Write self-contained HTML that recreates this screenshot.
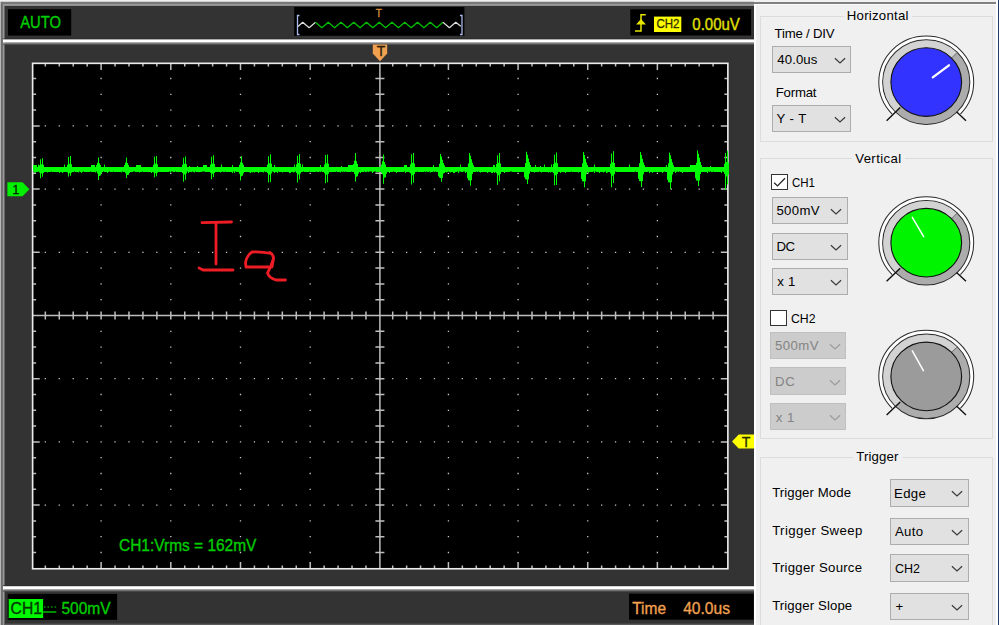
<!DOCTYPE html>
<html lang="en"><head><meta charset="utf-8"><title>Oscilloscope</title>
<style>
html,body{margin:0;padding:0}
body{width:999px;height:625px;overflow:hidden;background:#f0f0f0;position:relative;font-family:"Liberation Sans",sans-serif}
.scope{position:absolute;left:0;top:0;display:block}
.scope text{font-family:"Liberation Sans",sans-serif}
.panel{position:absolute;left:754px;top:0;width:245px;height:625px;background:#f0f0f0;overflow:hidden}
.wl{position:absolute;left:0;top:4px;width:2.2px;height:621px;background:#fff}
.rt{position:absolute;left:0;top:1.9px;width:242.4px;height:2.1px;background:#808080}
.rt2{position:absolute;left:0;top:4px;width:242.4px;height:1.2px;background:#fbfbfb}
.re1{position:absolute;left:242.4px;top:0;width:1.6px;height:625px;background:#fff}
.re2{position:absolute;left:244px;top:0;width:1px;height:625px;background:#1e3a6e}
.gb{position:absolute;box-sizing:border-box;border:1px solid #dcdcdc}
.cover{position:absolute;background:#f0f0f0}
.dd{position:absolute;box-sizing:border-box;background:#e1e1e1;border:1px solid #adadad}
.dd.dis{background:#cccccc;border-color:#bfbfbf}
.chev{position:absolute;display:block}
.cb{position:absolute;box-sizing:border-box;width:16.6px;height:16.4px;border:1.2px solid #333;background:#fff}
.cb svg{position:absolute;left:-1.2px;top:-1.2px}
.knobs{position:absolute;left:0;top:0}
.t{position:absolute;white-space:nowrap;transform-origin:0 0;font-size:13.2px;line-height:13.2px;height:13.2px}
</style></head>
<body>
<svg class="scope" width="754" height="625" viewBox="0 0 754 625">
<rect x="0" y="0" width="754" height="625" fill="#333"/>
<rect x="0" y="0" width="754" height="1.9" fill="#f0f0f0"/>
<rect x="0" y="1.9" width="1.1" height="624" fill="#b8b8b8"/>
<rect x="1.1" y="1.9" width="752.9" height="2.1" fill="#787878"/>
<rect x="1.1" y="1.9" width="1.9" height="624" fill="#747474"/>
<rect x="3" y="4" width="751" height="1.9" fill="#9a9a9a"/>
<rect x="3" y="4" width="1.5" height="622" fill="#9a9a9a"/>
<rect x="4.5" y="623.6" width="749.5" height="1.4" fill="#5a5a5a"/>
<rect x="3" y="38.5" width="751" height="1" fill="#2b2b2b"/>
<rect x="3" y="39.4" width="751" height="3.1" fill="#fff"/>
<rect x="3" y="42.5" width="751" height="1" fill="#bdbdbd"/>
<rect x="3" y="43.5" width="751" height="1" fill="#777"/>
<rect x="3" y="44.5" width="751" height="0.6" fill="#4a4a4a"/>
<rect x="3" y="585.3" width="751" height="1" fill="#2b2b2b"/>
<rect x="3" y="586.2" width="751" height="3.1" fill="#fff"/>
<rect x="3" y="589.3" width="751" height="1" fill="#bdbdbd"/>
<rect x="3" y="590.3" width="751" height="1" fill="#777"/>
<rect x="3" y="591.3" width="751" height="0.6" fill="#4a4a4a"/>
<rect x="8" y="9.2" width="63.2" height="26.4" fill="#000"/>
<rect x="294.2" y="7" width="170.2" height="28.8" fill="#000"/>
<rect x="630.3" y="9.3" width="120.8" height="26.2" fill="#000"/>
<rect x="7.7" y="593.9" width="109.4" height="26" fill="#000"/>
<rect x="629" y="593.7" width="124.7" height="26" fill="#000"/>
<rect x="31.8" y="62.5" width="697.1" height="507.2" fill="#000"/>
<path d="M44.69,125.9h1.3M58.63,125.9h1.3M72.57,125.9h1.3M86.51,125.9h1.3M100.45,125.9h1.3M114.39,125.9h1.3M128.33,125.9h1.3M142.27,125.9h1.3M156.21,125.9h1.3M170.15,125.9h1.3M184.09,125.9h1.3M198.03,125.9h1.3M211.97,125.9h1.3M225.91,125.9h1.3M239.85,125.9h1.3M253.79,125.9h1.3M267.73,125.9h1.3M281.67,125.9h1.3M295.61,125.9h1.3M309.55,125.9h1.3M323.49,125.9h1.3M337.43,125.9h1.3M351.37,125.9h1.3M365.31,125.9h1.3M379.25,125.9h1.3M392.05,125.9h1.3M405.98,125.9h1.3M419.91,125.9h1.3M433.84,125.9h1.3M447.77,125.9h1.3M461.7,125.9h1.3M475.63,125.9h1.3M489.56,125.9h1.3M503.49,125.9h1.3M517.42,125.9h1.3M531.35,125.9h1.3M545.28,125.9h1.3M559.21,125.9h1.3M573.14,125.9h1.3M587.07,125.9h1.3M601,125.9h1.3M614.93,125.9h1.3M628.86,125.9h1.3M642.79,125.9h1.3M656.72,125.9h1.3M670.65,125.9h1.3M684.58,125.9h1.3M698.51,125.9h1.3M712.44,125.9h1.3M44.69,189.1h1.3M58.63,189.1h1.3M72.57,189.1h1.3M86.51,189.1h1.3M100.45,189.1h1.3M114.39,189.1h1.3M128.33,189.1h1.3M142.27,189.1h1.3M156.21,189.1h1.3M170.15,189.1h1.3M184.09,189.1h1.3M198.03,189.1h1.3M211.97,189.1h1.3M225.91,189.1h1.3M239.85,189.1h1.3M253.79,189.1h1.3M267.73,189.1h1.3M281.67,189.1h1.3M295.61,189.1h1.3M309.55,189.1h1.3M323.49,189.1h1.3M337.43,189.1h1.3M351.37,189.1h1.3M365.31,189.1h1.3M379.25,189.1h1.3M392.05,189.1h1.3M405.98,189.1h1.3M419.91,189.1h1.3M433.84,189.1h1.3M447.77,189.1h1.3M461.7,189.1h1.3M475.63,189.1h1.3M489.56,189.1h1.3M503.49,189.1h1.3M517.42,189.1h1.3M531.35,189.1h1.3M545.28,189.1h1.3M559.21,189.1h1.3M573.14,189.1h1.3M587.07,189.1h1.3M601,189.1h1.3M614.93,189.1h1.3M628.86,189.1h1.3M642.79,189.1h1.3M656.72,189.1h1.3M670.65,189.1h1.3M684.58,189.1h1.3M698.51,189.1h1.3M712.44,189.1h1.3M44.69,252.3h1.3M58.63,252.3h1.3M72.57,252.3h1.3M86.51,252.3h1.3M100.45,252.3h1.3M114.39,252.3h1.3M128.33,252.3h1.3M142.27,252.3h1.3M156.21,252.3h1.3M170.15,252.3h1.3M184.09,252.3h1.3M198.03,252.3h1.3M211.97,252.3h1.3M225.91,252.3h1.3M239.85,252.3h1.3M253.79,252.3h1.3M267.73,252.3h1.3M281.67,252.3h1.3M295.61,252.3h1.3M309.55,252.3h1.3M323.49,252.3h1.3M337.43,252.3h1.3M351.37,252.3h1.3M365.31,252.3h1.3M379.25,252.3h1.3M392.05,252.3h1.3M405.98,252.3h1.3M419.91,252.3h1.3M433.84,252.3h1.3M447.77,252.3h1.3M461.7,252.3h1.3M475.63,252.3h1.3M489.56,252.3h1.3M503.49,252.3h1.3M517.42,252.3h1.3M531.35,252.3h1.3M545.28,252.3h1.3M559.21,252.3h1.3M573.14,252.3h1.3M587.07,252.3h1.3M601,252.3h1.3M614.93,252.3h1.3M628.86,252.3h1.3M642.79,252.3h1.3M656.72,252.3h1.3M670.65,252.3h1.3M684.58,252.3h1.3M698.51,252.3h1.3M712.44,252.3h1.3M44.69,378.7h1.3M58.63,378.7h1.3M72.57,378.7h1.3M86.51,378.7h1.3M100.45,378.7h1.3M114.39,378.7h1.3M128.33,378.7h1.3M142.27,378.7h1.3M156.21,378.7h1.3M170.15,378.7h1.3M184.09,378.7h1.3M198.03,378.7h1.3M211.97,378.7h1.3M225.91,378.7h1.3M239.85,378.7h1.3M253.79,378.7h1.3M267.73,378.7h1.3M281.67,378.7h1.3M295.61,378.7h1.3M309.55,378.7h1.3M323.49,378.7h1.3M337.43,378.7h1.3M351.37,378.7h1.3M365.31,378.7h1.3M379.25,378.7h1.3M392.05,378.7h1.3M405.98,378.7h1.3M419.91,378.7h1.3M433.84,378.7h1.3M447.77,378.7h1.3M461.7,378.7h1.3M475.63,378.7h1.3M489.56,378.7h1.3M503.49,378.7h1.3M517.42,378.7h1.3M531.35,378.7h1.3M545.28,378.7h1.3M559.21,378.7h1.3M573.14,378.7h1.3M587.07,378.7h1.3M601,378.7h1.3M614.93,378.7h1.3M628.86,378.7h1.3M642.79,378.7h1.3M656.72,378.7h1.3M670.65,378.7h1.3M684.58,378.7h1.3M698.51,378.7h1.3M712.44,378.7h1.3M44.69,441.9h1.3M58.63,441.9h1.3M72.57,441.9h1.3M86.51,441.9h1.3M100.45,441.9h1.3M114.39,441.9h1.3M128.33,441.9h1.3M142.27,441.9h1.3M156.21,441.9h1.3M170.15,441.9h1.3M184.09,441.9h1.3M198.03,441.9h1.3M211.97,441.9h1.3M225.91,441.9h1.3M239.85,441.9h1.3M253.79,441.9h1.3M267.73,441.9h1.3M281.67,441.9h1.3M295.61,441.9h1.3M309.55,441.9h1.3M323.49,441.9h1.3M337.43,441.9h1.3M351.37,441.9h1.3M365.31,441.9h1.3M379.25,441.9h1.3M392.05,441.9h1.3M405.98,441.9h1.3M419.91,441.9h1.3M433.84,441.9h1.3M447.77,441.9h1.3M461.7,441.9h1.3M475.63,441.9h1.3M489.56,441.9h1.3M503.49,441.9h1.3M517.42,441.9h1.3M531.35,441.9h1.3M545.28,441.9h1.3M559.21,441.9h1.3M573.14,441.9h1.3M587.07,441.9h1.3M601,441.9h1.3M614.93,441.9h1.3M628.86,441.9h1.3M642.79,441.9h1.3M656.72,441.9h1.3M670.65,441.9h1.3M684.58,441.9h1.3M698.51,441.9h1.3M712.44,441.9h1.3M44.69,505.1h1.3M58.63,505.1h1.3M72.57,505.1h1.3M86.51,505.1h1.3M100.45,505.1h1.3M114.39,505.1h1.3M128.33,505.1h1.3M142.27,505.1h1.3M156.21,505.1h1.3M170.15,505.1h1.3M184.09,505.1h1.3M198.03,505.1h1.3M211.97,505.1h1.3M225.91,505.1h1.3M239.85,505.1h1.3M253.79,505.1h1.3M267.73,505.1h1.3M281.67,505.1h1.3M295.61,505.1h1.3M309.55,505.1h1.3M323.49,505.1h1.3M337.43,505.1h1.3M351.37,505.1h1.3M365.31,505.1h1.3M379.25,505.1h1.3M392.05,505.1h1.3M405.98,505.1h1.3M419.91,505.1h1.3M433.84,505.1h1.3M447.77,505.1h1.3M461.7,505.1h1.3M475.63,505.1h1.3M489.56,505.1h1.3M503.49,505.1h1.3M517.42,505.1h1.3M531.35,505.1h1.3M545.28,505.1h1.3M559.21,505.1h1.3M573.14,505.1h1.3M587.07,505.1h1.3M601,505.1h1.3M614.93,505.1h1.3M628.86,505.1h1.3M642.79,505.1h1.3M656.72,505.1h1.3M670.65,505.1h1.3M684.58,505.1h1.3M698.51,505.1h1.3M712.44,505.1h1.3M100.45,78.5h1.3M100.45,94.3h1.3M100.45,110.1h1.3M100.45,141.7h1.3M100.45,157.5h1.3M100.45,173.3h1.3M100.45,204.9h1.3M100.45,220.7h1.3M100.45,236.5h1.3M100.45,268.1h1.3M100.45,283.9h1.3M100.45,299.7h1.3M100.45,331.3h1.3M100.45,347.1h1.3M100.45,362.9h1.3M100.45,394.5h1.3M100.45,410.3h1.3M100.45,426.1h1.3M100.45,457.7h1.3M100.45,473.5h1.3M100.45,489.3h1.3M100.45,520.9h1.3M100.45,536.7h1.3M100.45,552.5h1.3M170.15,78.5h1.3M170.15,94.3h1.3M170.15,110.1h1.3M170.15,141.7h1.3M170.15,157.5h1.3M170.15,173.3h1.3M170.15,204.9h1.3M170.15,220.7h1.3M170.15,236.5h1.3M170.15,268.1h1.3M170.15,283.9h1.3M170.15,299.7h1.3M170.15,331.3h1.3M170.15,347.1h1.3M170.15,362.9h1.3M170.15,394.5h1.3M170.15,410.3h1.3M170.15,426.1h1.3M170.15,457.7h1.3M170.15,473.5h1.3M170.15,489.3h1.3M170.15,520.9h1.3M170.15,536.7h1.3M170.15,552.5h1.3M239.85,78.5h1.3M239.85,94.3h1.3M239.85,110.1h1.3M239.85,141.7h1.3M239.85,157.5h1.3M239.85,173.3h1.3M239.85,204.9h1.3M239.85,220.7h1.3M239.85,236.5h1.3M239.85,268.1h1.3M239.85,283.9h1.3M239.85,299.7h1.3M239.85,331.3h1.3M239.85,347.1h1.3M239.85,362.9h1.3M239.85,394.5h1.3M239.85,410.3h1.3M239.85,426.1h1.3M239.85,457.7h1.3M239.85,473.5h1.3M239.85,489.3h1.3M239.85,520.9h1.3M239.85,536.7h1.3M239.85,552.5h1.3M309.55,78.5h1.3M309.55,94.3h1.3M309.55,110.1h1.3M309.55,141.7h1.3M309.55,157.5h1.3M309.55,173.3h1.3M309.55,204.9h1.3M309.55,220.7h1.3M309.55,236.5h1.3M309.55,268.1h1.3M309.55,283.9h1.3M309.55,299.7h1.3M309.55,331.3h1.3M309.55,347.1h1.3M309.55,362.9h1.3M309.55,394.5h1.3M309.55,410.3h1.3M309.55,426.1h1.3M309.55,457.7h1.3M309.55,473.5h1.3M309.55,489.3h1.3M309.55,520.9h1.3M309.55,536.7h1.3M309.55,552.5h1.3M447.77,78.5h1.3M447.77,94.3h1.3M447.77,110.1h1.3M447.77,141.7h1.3M447.77,157.5h1.3M447.77,173.3h1.3M447.77,204.9h1.3M447.77,220.7h1.3M447.77,236.5h1.3M447.77,268.1h1.3M447.77,283.9h1.3M447.77,299.7h1.3M447.77,331.3h1.3M447.77,347.1h1.3M447.77,362.9h1.3M447.77,394.5h1.3M447.77,410.3h1.3M447.77,426.1h1.3M447.77,457.7h1.3M447.77,473.5h1.3M447.77,489.3h1.3M447.77,520.9h1.3M447.77,536.7h1.3M447.77,552.5h1.3M517.42,78.5h1.3M517.42,94.3h1.3M517.42,110.1h1.3M517.42,141.7h1.3M517.42,157.5h1.3M517.42,173.3h1.3M517.42,204.9h1.3M517.42,220.7h1.3M517.42,236.5h1.3M517.42,268.1h1.3M517.42,283.9h1.3M517.42,299.7h1.3M517.42,331.3h1.3M517.42,347.1h1.3M517.42,362.9h1.3M517.42,394.5h1.3M517.42,410.3h1.3M517.42,426.1h1.3M517.42,457.7h1.3M517.42,473.5h1.3M517.42,489.3h1.3M517.42,520.9h1.3M517.42,536.7h1.3M517.42,552.5h1.3M587.07,78.5h1.3M587.07,94.3h1.3M587.07,110.1h1.3M587.07,141.7h1.3M587.07,157.5h1.3M587.07,173.3h1.3M587.07,204.9h1.3M587.07,220.7h1.3M587.07,236.5h1.3M587.07,268.1h1.3M587.07,283.9h1.3M587.07,299.7h1.3M587.07,331.3h1.3M587.07,347.1h1.3M587.07,362.9h1.3M587.07,394.5h1.3M587.07,410.3h1.3M587.07,426.1h1.3M587.07,457.7h1.3M587.07,473.5h1.3M587.07,489.3h1.3M587.07,520.9h1.3M587.07,536.7h1.3M587.07,552.5h1.3M656.72,78.5h1.3M656.72,94.3h1.3M656.72,110.1h1.3M656.72,141.7h1.3M656.72,157.5h1.3M656.72,173.3h1.3M656.72,204.9h1.3M656.72,220.7h1.3M656.72,236.5h1.3M656.72,268.1h1.3M656.72,283.9h1.3M656.72,299.7h1.3M656.72,331.3h1.3M656.72,347.1h1.3M656.72,362.9h1.3M656.72,394.5h1.3M656.72,410.3h1.3M656.72,426.1h1.3M656.72,457.7h1.3M656.72,473.5h1.3M656.72,489.3h1.3M656.72,520.9h1.3M656.72,536.7h1.3M656.72,552.5h1.3" stroke="#c6c6c6" stroke-width="1.3" fill="none"/>
<path d="M33,315.5H727.5M379.9,62.7V568.3M45.34,311.5v8M45.34,63.5v3.0M45.34,568.5v-3.0M59.28,311.5v8M59.28,63.5v3.0M59.28,568.5v-3.0M73.22,311.5v8M73.22,63.5v3.0M73.22,568.5v-3.0M87.16,311.5v8M87.16,63.5v3.0M87.16,568.5v-3.0M101.1,311.5v8M101.1,63.5v6.5M101.1,568.5v-6.5M115.04,311.5v8M115.04,63.5v3.0M115.04,568.5v-3.0M128.98,311.5v8M128.98,63.5v3.0M128.98,568.5v-3.0M142.92,311.5v8M142.92,63.5v3.0M142.92,568.5v-3.0M156.86,311.5v8M156.86,63.5v3.0M156.86,568.5v-3.0M170.8,311.5v8M170.8,63.5v6.5M170.8,568.5v-6.5M184.74,311.5v8M184.74,63.5v3.0M184.74,568.5v-3.0M198.68,311.5v8M198.68,63.5v3.0M198.68,568.5v-3.0M212.62,311.5v8M212.62,63.5v3.0M212.62,568.5v-3.0M226.56,311.5v8M226.56,63.5v3.0M226.56,568.5v-3.0M240.5,311.5v8M240.5,63.5v6.5M240.5,568.5v-6.5M254.44,311.5v8M254.44,63.5v3.0M254.44,568.5v-3.0M268.38,311.5v8M268.38,63.5v3.0M268.38,568.5v-3.0M282.32,311.5v8M282.32,63.5v3.0M282.32,568.5v-3.0M296.26,311.5v8M296.26,63.5v3.0M296.26,568.5v-3.0M310.2,311.5v8M310.2,63.5v6.5M310.2,568.5v-6.5M324.14,311.5v8M324.14,63.5v3.0M324.14,568.5v-3.0M338.08,311.5v8M338.08,63.5v3.0M338.08,568.5v-3.0M352.02,311.5v8M352.02,63.5v3.0M352.02,568.5v-3.0M365.96,311.5v8M365.96,63.5v3.0M365.96,568.5v-3.0M379.9,311.5v8M379.9,63.5v6.5M379.9,568.5v-6.5M392.7,311.5v8M392.7,63.5v3.0M392.7,568.5v-3.0M406.63,311.5v8M406.63,63.5v3.0M406.63,568.5v-3.0M420.56,311.5v8M420.56,63.5v3.0M420.56,568.5v-3.0M434.49,311.5v8M434.49,63.5v3.0M434.49,568.5v-3.0M448.42,311.5v8M448.42,63.5v6.5M448.42,568.5v-6.5M462.35,311.5v8M462.35,63.5v3.0M462.35,568.5v-3.0M476.28,311.5v8M476.28,63.5v3.0M476.28,568.5v-3.0M490.21,311.5v8M490.21,63.5v3.0M490.21,568.5v-3.0M504.14,311.5v8M504.14,63.5v3.0M504.14,568.5v-3.0M518.07,311.5v8M518.07,63.5v6.5M518.07,568.5v-6.5M532,311.5v8M532,63.5v3.0M532,568.5v-3.0M545.93,311.5v8M545.93,63.5v3.0M545.93,568.5v-3.0M559.86,311.5v8M559.86,63.5v3.0M559.86,568.5v-3.0M573.79,311.5v8M573.79,63.5v3.0M573.79,568.5v-3.0M587.72,311.5v8M587.72,63.5v6.5M587.72,568.5v-6.5M601.65,311.5v8M601.65,63.5v3.0M601.65,568.5v-3.0M615.58,311.5v8M615.58,63.5v3.0M615.58,568.5v-3.0M629.51,311.5v8M629.51,63.5v3.0M629.51,568.5v-3.0M643.44,311.5v8M643.44,63.5v3.0M643.44,568.5v-3.0M657.37,311.5v8M657.37,63.5v6.5M657.37,568.5v-6.5M671.3,311.5v8M671.3,63.5v3.0M671.3,568.5v-3.0M685.23,311.5v8M685.23,63.5v3.0M685.23,568.5v-3.0M699.16,311.5v8M699.16,63.5v3.0M699.16,568.5v-3.0M713.09,311.5v8M713.09,63.5v3.0M713.09,568.5v-3.0M375.4,78.5h9M33.2,78.5h2.9M727.3,78.5h-2.9M375.4,94.3h9M33.2,94.3h2.9M727.3,94.3h-2.9M375.4,110.1h9M33.2,110.1h2.9M727.3,110.1h-2.9M375.4,125.9h9M33.2,125.9h6.5M727.3,125.9h-6.5M375.4,141.7h9M33.2,141.7h2.9M727.3,141.7h-2.9M375.4,157.5h9M33.2,157.5h2.9M727.3,157.5h-2.9M375.4,173.3h9M33.2,173.3h2.9M727.3,173.3h-2.9M375.4,189.1h9M33.2,189.1h6.5M727.3,189.1h-6.5M375.4,204.9h9M33.2,204.9h2.9M727.3,204.9h-2.9M375.4,220.7h9M33.2,220.7h2.9M727.3,220.7h-2.9M375.4,236.5h9M33.2,236.5h2.9M727.3,236.5h-2.9M375.4,252.3h9M33.2,252.3h6.5M727.3,252.3h-6.5M375.4,268.1h9M33.2,268.1h2.9M727.3,268.1h-2.9M375.4,283.9h9M33.2,283.9h2.9M727.3,283.9h-2.9M375.4,299.7h9M33.2,299.7h2.9M727.3,299.7h-2.9M375.4,315.5h9M33.2,315.5h6.5M727.3,315.5h-6.5M375.4,331.3h9M33.2,331.3h2.9M727.3,331.3h-2.9M375.4,347.1h9M33.2,347.1h2.9M727.3,347.1h-2.9M375.4,362.9h9M33.2,362.9h2.9M727.3,362.9h-2.9M375.4,378.7h9M33.2,378.7h6.5M727.3,378.7h-6.5M375.4,394.5h9M33.2,394.5h2.9M727.3,394.5h-2.9M375.4,410.3h9M33.2,410.3h2.9M727.3,410.3h-2.9M375.4,426.1h9M33.2,426.1h2.9M727.3,426.1h-2.9M375.4,441.9h9M33.2,441.9h6.5M727.3,441.9h-6.5M375.4,457.7h9M33.2,457.7h2.9M727.3,457.7h-2.9M375.4,473.5h9M33.2,473.5h2.9M727.3,473.5h-2.9M375.4,489.3h9M33.2,489.3h2.9M727.3,489.3h-2.9M375.4,505.1h9M33.2,505.1h6.5M727.3,505.1h-6.5M375.4,520.9h9M33.2,520.9h2.9M727.3,520.9h-2.9M375.4,536.7h9M33.2,536.7h2.9M727.3,536.7h-2.9M375.4,552.5h9M33.2,552.5h2.9M727.3,552.5h-2.9" stroke="#bebebe" stroke-width="1.5" fill="none"/>
<rect x="32.6" y="63.3" width="695.3" height="505.5" fill="none" stroke="#ececec" stroke-width="1.7"/>
<path d="M33,165V165H34V165H35V165H36V164.9H37V166.9H38V164.4H39V165.16H40V159.13H41V164.29H42V158.21H43V164.73H44V166.9H45V166.9H46V166.9H47V166.9H48V166.9H49V166.9H50V166.9H51V166.9H52V166.9H53V166.9H54V166.9H55V166.9H56V166.9H57V166.9H58V166.9H59V166.9H60V166.9H61V166.9H62V166.9H63V166.9H64V164.4H65V166.9H66V166.9H67V164.74H68V156.91H69V163.66H70V156.11H71V164.2H72V166.9H73V166.9H74V166.9H75V166.9H76V166.9H77V166.9H78V166.9H79V166.9H80V166.9H81V166.9H82V166.9H83V166.9H84V166.9H85V166.9H86V166.9H87V166.9H88V166.9H89V166.9H90V166.9H91V165H92V165H93V165H94V165H95V166.9H96V165.03H97V162.69H98V157.54H99V163.16H100V165.03H101V166.9H102V166.9H103V166.9H104V164.4H105V166.9H106V166.9H107V166.9H108V166.9H109V166.9H110V166.9H111V166.9H112V166.9H113V166.9H114V166.9H115V166.9H116V166.9H117V166.9H118V166.9H119V166.9H120V166.9H121V166.9H122V166.9H123V166.9H124V165H125V162.62H126V157.39H127V163.1H128V165H129V166.9H130V166.9H131V166.9H132V166.9H133V166.9H134V166.9H135V166.9H136V165H137V165H138V165H139V165H140V165H141V166.9H142V166.9H143V166.9H144V166.9H145V166.9H146V166.9H147V166.9H148V166.9H149V166.9H150V166.9H151V166.9H152V166.9H153V164.7H154V156.78H155V163.6H156V155.91H157V164.15H158V166.9H159V166.9H160V166.9H161V166.9H162V166.9H163V166.9H164V166.9H165V166.9H166V166.9H167V166.9H168V166.9H169V166.9H170V166.9H171V166.9H172V166.9H173V166.9H174V166.9H175V166.9H176V166.9H177V166.9H178V166.9H179V166.9H180V166.9H181V166.9H182V164.82H183V157.77H184V163.78H185V156.49H186V164.3H187V166.9H188V166.9H189V165.9H190V166.9H191V166.9H192V166.9H193V166.9H194V166.9H195V166.9H196V166.9H197V165.9H198V166.9H199V166.9H200V166.9H201V166.9H202V166.9H203V165H204V165H205V165H206V165H207V166.9H208V166.9H209V166.9H210V164.55H211V156.84H212V163.38H213V155.15H214V163.96H215V166.9H216V166.9H217V166.9H218V166.9H219V166.9H220V166.9H221V164.4H222V166.9H223V166.9H224V166.9H225V166.9H226V166.9H227V166.9H228V166.9H229V166.9H230V166.9H231V166.9H232V164.9H233V166.9H234V166.9H235V166.9H236V166.9H237V166.9H238V166.9H239V164.79H240V162.16H241V156.37H242V162.69H243V164.79H244V166.9H245V166.9H246V166.9H247V166.9H248V166.9H249V166.9H250V166.9H251V166.9H252V166.9H253V166.9H254V166.9H255V166.9H256V166.9H257V166.9H258V166.9H259V166.9H260V166.9H261V166.9H262V166.9H263V166.9H264V166.9H265V166.9H266V166.9H267V164.39H268V156.17H269V163.14H270V154.35H271V163.76H272V166.9H273V166.9H274V164.9H275V166.9H276V166.9H277V166.9H278V166.9H279V166.9H280V166.9H281V166.9H282V166.9H283V166.9H284V166.9H285V166.9H286V166.9H287V166.9H288V166.9H289V166.9H290V166.9H291V166.9H292V166.9H293V166.9H294V164.4H295V166.9H296V164.34H297V155.79H298V163.07H299V154.12H300V163.71H301V166.9H302V164.4H303V166.9H304V166.9H305V166.9H306V166.9H307V166.9H308V166.9H309V166.9H310V166.9H311V166.9H312V166.9H313V166.9H314V166.9H315V166.9H316V166.9H317V166.9H318V166.9H319V166.9H320V164.9H321V166.9H322V166.9H323V166.9H324V164.43H325V155.1H326V163.2H327V154.57H328V163.82H329V166.9H330V166.9H331V166.9H332V166.9H333V166.9H334V166.9H335V166.9H336V166.9H337V166.9H338V166.9H339V166.9H340V166.9H341V165.9H342V166.9H343V166.9H344V166.9H345V166.9H346V166.9H347V166.9H348V165H349V164.9H350V165H351V165H352V165H353V164.12H354V160.64H355V152.98H356V161.33H357V164.12H358V166.9H359V166.9H360V166.9H361V166.9H362V166.9H363V166.9H364V166.9H365V166.9H366V166.9H367V166.9H368V166.9H369V166.9H370V166.9H371V166.9H372V166.9H373V166.9H374V166.9H375V166.9H376V166.9H377V166.9H378V166.9H379V166.9H380V166.9H381V164.41H382V161.29H383V154.43H384V161.91H385V164.41H386V166.9H387V166.9H388V166.9H389V166.9H390V166.9H391V166.9H392V166.9H393V166.9H394V166.9H395V166.9H396V166.9H397V166.9H398V166.9H399V166.9H400V166.9H401V166.9H402V166.9H403V166.9H404V165H405V165H406V165H407V166.9H408V166.9H409V166.9H410V164.13H411V154.33H412V162.75H413V153.06H414V163.44H415V166.9H416V166.9H417V166.9H418V166.9H419V166.9H420V166.9H421V166.9H422V166.9H423V166.9H424V166.9H425V166.9H426V166.9H427V166.9H428V166.9H429V166.9H430V166.9H431V166.9H432V166.9H433V164.9H434V166.9H435V166.9H436V166.9H437V166.9H438V166.9H439V163.66H440V153.94H441V156.53H442V159.77H443V163.01H444V165.34H445V166.9H446V166.9H447V166.9H448V166.9H449V166.9H450V166.9H451V166.9H452V166.9H453V166.9H454V166.9H455V166.9H456V166.9H457V166.9H458V166.9H459V166.9H460V164.4H461V166.9H462V166.9H463V166.9H464V166.9H465V166.9H466V166.9H467V166.9H468V163.41H469V152.96H470V155.74H471V159.23H472V162.72H473V165.23H474V166.9H475V166.9H476V166.9H477V166.9H478V166.9H479V166.9H480V166.9H481V166.9H482V166.9H483V166.9H484V166.9H485V166.9H486V166.9H487V166.9H488V166.9H489V166.9H490V166.9H491V166.9H492V166.9H493V165H494V165H495V166.9H496V164.11H497V155.15H498V162.72H499V152.96H500V163.41H501V166.9H502V166.9H503V166.9H504V166.9H505V166.9H506V166.9H507V166.9H508V166.9H509V166.9H510V166.9H511V166.9H512V166.9H513V166.9H514V166.9H515V166.9H516V166.9H517V166.9H518V166.9H519V166.9H520V166.9H521V166.9H522V166.9H523V166.9H524V166.9H525V163.09H526V151.66H527V154.71H528V158.52H529V162.33H530V165.07H531V166.9H532V166.9H533V166.9H534V166.9H535V164.9H536V166.9H537V166.9H538V166.9H539V166.9H540V165.9H541V166.9H542V166.9H543V166.9H544V164.4H545V166.9H546V166.9H547V166.9H548V166.9H549V166.9H550V166.9H551V164.4H552V166.9H553V164.03H554V154.72H555V162.6H556V152.56H557V163.32H558V166.9H559V166.9H560V166.9H561V166.9H562V166.9H563V166.9H564V166.9H565V166.9H566V166.9H567V166.9H568V166.9H569V166.9H570V166.9H571V166.9H572V166.9H573V166.9H574V166.9H575V166.9H576V166.9H577V166.9H578V166.9H579V166.9H580V166.9H581V166.9H582V163.17H583V151.98H584V154.97H585V158.7H586V162.42H587V165.11H588V166.9H589V166.9H590V166.9H591V166.9H592V166.9H593V166.9H594V164.4H595V166.9H596V166.9H597V166.9H598V166.9H599V166.9H600V166.9H601V166.9H602V166.9H603V166.9H604V166.9H605V166.9H606V166.9H607V166.9H608V166.9H609V166.9H610V163.77H611V153.4H612V162.21H613V151.26H614V162.99H615V166.9H616V166.9H617V166.9H618V166.9H619V166.9H620V166.9H621V166.9H622V166.9H623V166.9H624V166.9H625V166.9H626V166.9H627V166.9H628V166.9H629V164.4H630V166.9H631V166.9H632V166.9H633V166.9H634V166.9H635V166.9H636V166.9H637V166.9H638V166.9H639V163.18H640V152H641V154.98H642V158.71H643V162.43H644V165.11H645V166.9H646V166.9H647V166.9H648V166.9H649V166.9H650V166.9H651V166.9H652V166.9H653V166.9H654V166.9H655V166.9H656V166.9H657V166.9H658V166.9H659V166.9H660V166.9H661V166.9H662V166.9H663V166.9H664V166.9H665V166.9H666V164.9H667V166.9H668V163.28H669V152.44H670V155.33H671V158.95H672V162.56H673V165.16H674V166.9H675V166.9H676V166.9H677V166.9H678V166.9H679V166.9H680V166.9H681V166.9H682V166.9H683V166.9H684V166.9H685V166.9H686V166.9H687V166.9H688V166.9H689V166.9H690V165H691V165H692V165H693V165H694V165H695V165H696V162.79H697V150.47H698V153.76H699V157.86H700V161.97H701V164.93H702V166.9H703V166.9H704V166.9H705V166.9H706V166.9H707V166.9H708V166.9H709V166.9H710V165.9H711V166.9H712V166.9H713V166.9H714V166.9H715V166.9H716V166.9H717V166.9H718V166.9H719V166.9H720V166.9H721V166.9H722V166.9H723V166.9H724V163.65H725V153.07H726V162.02H727V150.64H728V162.84H729V174.66H728V184.61H727V176.43H726V189.73H725V173.77H724V172H723V171.4H722V173H721V172H720V172H719V172H718V172H717V172H716V172H715V172H714V171.4H713V172H712V172H711V171.4H710V172H709V171.4H708V173H707V172H706V172H705V172H704V172H703V172H702V172H701V174.1H700V180.41H699V186.02H698V180.69H697V180.41H696V178.31H695V172H694V172H693V172H692V172H691V172H690V172H689V172H688V172H687V172H686V172H685V172H684V172H683V173H682V172H681V172H680V171.4H679V172H678V171.4H677V172H676V173H675V171.4H674V172H673V174.57H672V182.26H671V189.11H670V182.61H669V182.26H668V179.7H667V172H666V172H665V171.4H664V172H663V173H662V172H661V172H660V172H659V172H658V172H657V172H656V172H655V172H654V172H653V173H652V172H651V172H650V173H649V171.4H648V172H647V172H646V172H645V172H644V174.25H643V180.98H642V186.97H641V181.28H640V180.98H639V178.74H638V172H637V172H636V171.4H635V172H634V172H633V172H632V172H631V172H630V172H629V172H628V172H627V172H626V172H625V172H624V172H623V172H622V172H621V172H620V172H619V172H618V172H617V172H616V171.4H615V174.31H614V182.9H613V175.84H612V187.37H611V173.54H610V172H609V172H608V172.5H607V173H606V171.4H605V172H604V172.5H603V172H602V172H601V172H600V173H599V172H598V172H597V172H596V171.4H595V173H594V171.4H593V172H592V172H591V172H590V172H589V173H588V172H587V174.3H586V181.19H585V187.32H584V181.5H583V181.19H582V178.89H581V172H580V172H579V172.5H578V172H577V172H576V172H575V172H574V172H573V172H572V171.4H571V172H570V172H569V172H568V172H567V172H566V173H565V172H564V172H563V172H562V172H561V173H560V172H559V172H558V174H557V185.02H556V175.33H555V185.33H554V173.33H553V172H552V172H551V172.5H550V172H549V172.5H548V172H547V172H546V172H545V172H544V172H543V172H542V172.5H541V172H540V171.4H539V172H538V172H537V172H536V172H535V172.5H534V172H533V172H532V172H531V171.4H530V173.78H529V179.14H528V183.9H527V179.38H526V179.14H525V177.35H524V172H523V172H522V172H521V172H520V172H519V172H518V172H517V172H516V172H515V172H514V172H513V172H512V171.4H511V171.4H510V172H509V172H508V172H507V172H506V172H505V173H504V172H503V172H502V172H501V173.93H500V181.34H499V175.21H498V184.84H497V173.28H496V172H495V173H494V172H493V173H492V173H491V172H490V172H489V172H488V173H487V172H486V172H485V172H484V172H483V172H482V172H481V172.5H480V172H479V171.4H478V172H477V171.4H476V172H475V172H474V172H473V174.07H472V180.29H471V185.81H470V180.56H469V180.29H468V178.21H467V172H466V173H465V171.4H464V171.4H463V172H462V172H461V171.4H460V171.4H459V173H458V171.4H457V172H456V172H455V173H454V173H453V172H452V172H451V172.5H450V172H449V171.4H448V172H447V172.5H446V172H445V173H444V173.45H443V177.79H442V181.65H441V177.98H440V177.79H439V176.34H438V172H437V172H436V171.4H435V172H434V171.4H433V172H432V172H431V172.5H430V171.4H429V172H428V172H427V171.4H426V172H425V171.4H424V172H423V172H422V172H421V172H420V172H419V172H418V171.4H417V172H416V172H415V173.88H414V182.77H413V175.13H412V184.52H411V173.25H410V172.5H409V172H408V172H407V172H406V173H405V171.4H404V172H403V172H402V172H401V172H400V172H399V172H398V172H397V173H396V172H395V172H394V171.4H393V172H392V172H391V172H390V173H389V172H388V172H387V173.76H386V177.28H385V177.86H384V183.73H383V174.35H382V173H381V171.4H380V172H379V172H378V172H377V172H376V171.4H375V171.4H374V172H373V173H372V171.4H371V171.4H370V171.4H369V172H368V171.4H367V172H366V172H365V171.4H364V172H363V172H362V172H361V173H360V172H359V173.43H358V176.29H357V176.76H356V181.52H355V173.9H354V172H353V172H352V171.4H351V172H350V172H349V172H348V172H347V172H346V171.4H345V172H344V171.4H343V172H342V171.4H341V172.5H340V172H339V172H338V172H337V171.4H336V172H335V172H334V172H333V172H332V172H331V172H330V172H329V173.7H328V182.37H327V174.83H326V183.31H325V173.13H324V172H323V172H322V171.4H321V172H320V171.4H319V172H318V172H317V171.4H316V172H315V172H314V172H313V172H312V172H311V172H310V171.4H309V172H308V172H307V172H306V172H305V172H304V171.4H303V172H302V172H301V173.56H300V179.54H299V174.6H298V182.39H297V173.04H296V171.4H295V172H294V172.5H293V172H292V172H291V173H290V173H289V172H288V172H287V172H286V172H285V172H284V172H283V172.5H282V172H281V172H280V172H279V171.4H278V173H277V172H276V172H275V173H274V172H273V171.4H272V173.58H271V182.08H270V174.64H269V182.55H268V173.06H267V172H266V172H265V171.4H264V172.5H263V172H262V172H261V172H260V172H259V173H258V172H257V172H256V172H255V172.5H254V172H253V172.5H252V172H251V173H250V172.5H249V172H248V172H247V172H246V172H245V172H244V173.26H243V175.78H242V176.19H241V180.39H240V173.68H239V172H238V172H237V172H236V171.4H235V173H234V171.4H233V173H232V172H231V172H230V172H229V172H228V172H227V172H226V171.4H225V172H224V172H223V171.4H222V172H221V172.5H220V172H219V172H218V172H217V172H216V172H215V173.07H214V177H213V173.78H212V179.13H211V172.71H210V172H209V172H208V172H207V172H206V172H205V171.4H204V171.4H203V171.4H202V172H201V172H200V172H199V172H198V172H197V172H196V171.4H195V172.5H194V172H193V171.4H192V172H191V172H190V172H189V173H188V171.4H187V173.45H186V179.85H185V174.42H184V181.66H183V172.97H182V172H181V172H180V172H179V172H178V172H177V172H176V171.4H175V172H174V172H173V171.4H172V171.4H171V172.5H170V171.4H169V172H168V172H167V172H166V172H165V172H164V172H163V172H162V172H161V172H160V172H159V172H158V172.8H157V176.22H156V173.33H155V177.33H154V172.53H153V172H152V173H151V172H150V172H149V172H148V172H147V172H146V172H145V172H144V172H143V171.4H142V172H141V172H140V172.5H139V172H138V172H137V172H136V172H135V171.4H134V171.4H133V172H132V172H131V172H130V172.92H129V174.75H128V175.05H127V178.1H126V173.22H125V172H124V172H123V171.4H122V172.5H121V172H120V172H119V172H118V172H117V172H116V172H115V172H114V171.4H113V172H112V172H111V172H110V171.4H109V172H108V173H107V172H106V172H105V172H104V171.4H103V172H102V173.2H101V175.59H100V175.99H99V179.97H98V173.59H97V171.4H96V172.5H95V172H94V172H93V172H92V172H91V171.4H90V172H89V172H88V172H87V172H86V172H85V172H84V171.4H83V172H82V173H81V172H80V171.4H79V172.5H78V172H77V172H76V172H75V171.4H74V172H73V172H72V172.68H71V175.75H70V173.14H69V176.55H68V172.45H67V172H66V172H65V172H64V172H63V173H62V172H61V172H60V173H59V172H58V172H57V172H56V172H55V172H54V172H53V172H52V171.4H51V172H50V172H49V172H48V172.5H47V172H46V172H45V172H44V172.93H43V176.65H42V173.55H41V178.2H40V172.62H39V171.4H38V172H37V172H36V172.5H35V172.5H34V171.4H33Z" fill="#00ff00"/>
<g fill="none" stroke="#ee1c24" stroke-width="2.8" stroke-linecap="round" stroke-linejoin="round">
<path d="M202,222.6 L231.5,222"/>
<path d="M216,223 L216,264"/>
<path d="M199,268 L203,270 L233,270"/>
<path d="M271,253.5 Q262,251.5 252,252 Q246.5,256 245.5,262.5 L246,267 L272,267 L273.5,258.5 Q271,267 267.5,273 Q269,278 276,280 L285.5,280"/>
<path d="M270,252.5 Q273,254 273.5,258"/>
</g>
<path d="M299.5,15.5H297.5V34.5H299.5" fill="none" stroke="#a8b8e8" stroke-width="1.3"/>
<path d="M460,15.5H462V34.5H460" fill="none" stroke="#a8b8e8" stroke-width="1.3"/>
<polyline points="298,26.5 302.75,22.3 309.12,27.7 315.5,22.3" fill="none" stroke="#e0e0e0" stroke-width="1.2" stroke-linejoin="round"/>
<polyline points="315.5,22.3 321.88,27.7 328.25,22.3 334.62,27.7 341,22.3 347.38,27.7 353.75,22.3 360.12,27.7 366.5,22.3 372.88,27.7 379.25,22.3 385.62,27.7 392,22.3 398.38,27.7 404.75,22.3 411.12,27.7 417.5,22.3 423.88,27.7 430.25,22.3 436.62,27.7 443,22.3" fill="none" stroke="#00c000" stroke-width="1.3" stroke-linejoin="round"/>
<polyline points="443,22.3 449.38,27.7 455.75,22.3 460.8,26.3" fill="none" stroke="#e0e0e0" stroke-width="1.2" stroke-linejoin="round"/>
<path d="M372.8,44.6H387.2V53.5L380,61.3L372.8,53.5Z" fill="#f0a050"/>
<path d="M7.4,182.2H22.6L29.4,189.2L22.6,196.2H7.4Z" fill="#00f000"/>
<path d="M754,434.5H738.7L732,441.5L738.7,448.6H754Z" fill="#ffff00"/>
<path d="M635,31H641V14.8H645.7" fill="none" stroke="#e6e600" stroke-width="1.5"/>
<path d="M636.1,24.4L641,18.9L645.9,24.4Z" fill="#e6e600"/>
<rect x="654" y="16.6" width="27.3" height="15.4" fill="#ffff00"/>
<rect x="8.7" y="599" width="34.4" height="19" fill="#00f800"/>
<path d="M44,607h1.6m1.9,0h1.6m1.9,0h1.6m1.9,0h1.6" stroke="#00cc00" stroke-width="1.2" fill="none"/>
<path d="M43.1,612H56.3" stroke="#00cc00" stroke-width="1.4" fill="none"/>
<text id="st0" x="20.2" y="28.3" font-size="15.6" fill="#00cc00" stroke="#00cc00" stroke-width="0.35" textLength="40.8" lengthAdjust="spacingAndGlyphs">AUTO</text>
<text id="st1" x="378.8" y="17.1" font-size="10" fill="#dc9040" stroke="#dc9040" stroke-width="0.3" text-anchor="middle">T</text>
<text id="st2" x="381" y="56.2" font-size="14" fill="#2a1c08" stroke="#2a1c08" stroke-width="0.3" text-anchor="middle">T</text>
<text id="st3" x="656.4" y="28.1" font-size="12.2" fill="#303000" stroke="#303000" stroke-width="0.3" textLength="23" lengthAdjust="spacingAndGlyphs">CH2</text>
<text id="st4" x="692.3" y="30" font-size="16" fill="#e0e000" stroke="#e0e000" stroke-width="0.35" textLength="47.5" lengthAdjust="spacingAndGlyphs">0.00uV</text>
<text id="st5" x="15.9" y="193.6" font-size="12" fill="#042004" stroke="#042004" stroke-width="0.3" text-anchor="middle">1</text>
<text id="st6" x="119" y="550.5" font-size="16" fill="#00cc00" stroke="#00cc00" stroke-width="0.35" textLength="137.4" lengthAdjust="spacingAndGlyphs">CH1:Vrms = 162mV</text>
<text id="st7" x="10.6" y="614.2" font-size="16" fill="#043804" stroke="#043804" stroke-width="0.35" textLength="31.4" lengthAdjust="spacingAndGlyphs">CH1</text>
<text id="st8" x="61.4" y="614.2" font-size="16" fill="#00cc00" stroke="#00cc00" stroke-width="0.35" textLength="49.2" lengthAdjust="spacingAndGlyphs">500mV</text>
<text id="st9" x="632.2" y="614.2" font-size="16" fill="#f0a050" stroke="#f0a050" stroke-width="0.35" textLength="33.8" lengthAdjust="spacingAndGlyphs">Time</text>
<text id="st10" x="683.2" y="614.2" font-size="16" fill="#f0a050" stroke="#f0a050" stroke-width="0.35" textLength="46.8" lengthAdjust="spacingAndGlyphs">40.0us</text>
<text id="st11" x="746" y="446.8" font-size="14.2" fill="#2a2a00" stroke="#2a2a00" stroke-width="0.3" text-anchor="middle">T</text>
</svg>
<div class="panel">
<div class="wl"></div>
<div class="gb" style="left:6.2000000000000455px;top:15.8px;width:232.6px;height:125.9px"></div>
<div class="gb" style="left:6.2000000000000455px;top:158.2px;width:232.6px;height:281px"></div>
<div class="gb" style="left:6.2000000000000455px;top:456.8px;width:232.6px;height:180px"></div>
<div class="cover" style="left:89.5px;top:10px;width:68.5px;height:14px"></div>
<div class="cover" style="left:97.5px;top:152px;width:53.0px;height:14px"></div>
<div class="cover" style="left:98.5px;top:450px;width:49.5px;height:14px"></div>
<div class="dd" style="left:17.7px;top:46.4px;width:79.7px;height:27.1px"><svg class="chev" style="left:61px;top:10.05px" width="12" height="8" viewBox="0 0 12 8"><path d="M0.9,1.2L6,6L11.1,1.2" fill="none" stroke="#3a3a3a" stroke-width="1.2"/></svg></div>
<div class="dd" style="left:17.7px;top:104.8px;width:79.7px;height:27.1px"><svg class="chev" style="left:61px;top:10.05px" width="12" height="8" viewBox="0 0 12 8"><path d="M0.9,1.2L6,6L11.1,1.2" fill="none" stroke="#3a3a3a" stroke-width="1.2"/></svg></div>
<div class="cb" style="left:17.299999999999955px;top:173.7px"><svg width="16" height="16" viewBox="0 0 16 16"><path d="M3.1,8.8L6.5,11.9L14,4.2" fill="none" stroke="#222" stroke-width="1.25"/></svg></div>
<div class="dd" style="left:17.7px;top:196.8px;width:76.2px;height:27.2px"><svg class="chev" style="left:57.6px;top:10.1px" width="12" height="8" viewBox="0 0 12 8"><path d="M0.9,1.2L6,6L11.1,1.2" fill="none" stroke="#3a3a3a" stroke-width="1.2"/></svg></div>
<div class="dd" style="left:17.7px;top:232.6px;width:76.2px;height:27px"><svg class="chev" style="left:57.6px;top:10px" width="12" height="8" viewBox="0 0 12 8"><path d="M0.9,1.2L6,6L11.1,1.2" fill="none" stroke="#3a3a3a" stroke-width="1.2"/></svg></div>
<div class="dd" style="left:17.7px;top:268.2px;width:76.2px;height:27.2px"><svg class="chev" style="left:57.6px;top:10.1px" width="12" height="8" viewBox="0 0 12 8"><path d="M0.9,1.2L6,6L11.1,1.2" fill="none" stroke="#3a3a3a" stroke-width="1.2"/></svg></div>
<div class="cb" style="left:16.399999999999977px;top:309.8px"></div>
<div class="dd dis" style="left:16.4px;top:331.9px;width:75.8px;height:27.2px"><svg class="chev" style="left:57.7px;top:10.1px" width="12" height="8" viewBox="0 0 12 8"><path d="M0.9,1.2L6,6L11.1,1.2" fill="none" stroke="#9c9c9c" stroke-width="1.2"/></svg></div>
<div class="dd dis" style="left:16.4px;top:367.4px;width:75.8px;height:27.3px"><svg class="chev" style="left:57.7px;top:10.15px" width="12" height="8" viewBox="0 0 12 8"><path d="M0.9,1.2L6,6L11.1,1.2" fill="none" stroke="#9c9c9c" stroke-width="1.2"/></svg></div>
<div class="dd dis" style="left:16.4px;top:402.8px;width:75.8px;height:27.6px"><svg class="chev" style="left:57.7px;top:10.3px" width="12" height="8" viewBox="0 0 12 8"><path d="M0.9,1.2L6,6L11.1,1.2" fill="none" stroke="#9c9c9c" stroke-width="1.2"/></svg></div>
<div class="dd" style="left:136.1px;top:479.3px;width:78.6px;height:27.3px"><svg class="chev" style="left:60.2px;top:10.15px" width="12" height="8" viewBox="0 0 12 8"><path d="M0.9,1.2L6,6L11.1,1.2" fill="none" stroke="#3a3a3a" stroke-width="1.2"/></svg></div>
<div class="dd" style="left:136.1px;top:517.6px;width:78.6px;height:27.3px"><svg class="chev" style="left:60.2px;top:10.15px" width="12" height="8" viewBox="0 0 12 8"><path d="M0.9,1.2L6,6L11.1,1.2" fill="none" stroke="#3a3a3a" stroke-width="1.2"/></svg></div>
<div class="dd" style="left:136.1px;top:554.3px;width:78.6px;height:27.3px"><svg class="chev" style="left:60.2px;top:10.15px" width="12" height="8" viewBox="0 0 12 8"><path d="M0.9,1.2L6,6L11.1,1.2" fill="none" stroke="#3a3a3a" stroke-width="1.2"/></svg></div>
<div class="dd" style="left:136.1px;top:592.6px;width:78.6px;height:27.3px"><svg class="chev" style="left:60.2px;top:10.15px" width="12" height="8" viewBox="0 0 12 8"><path d="M0.9,1.2L6,6L11.1,1.2" fill="none" stroke="#3a3a3a" stroke-width="1.2"/></svg></div>
<svg class="knobs" width="245" height="625" viewBox="754 0 245 625"><g transform="translate(926.25,82.1) scale(1.016,0.986)"><path d="M-33.59,32.44A46.7,46.7 0 1 1 33.59,32.44L30.86,29.8A42.9,42.9 0 1 0 -30.86,29.8Z" fill="#fff"/><path d="M-33.59,32.44A46.7,46.7 0 1 1 33.59,32.44" fill="none" stroke="#2a2a2a" stroke-width="1"/><circle cx="0" cy="0" r="42.9" fill="#acacac" stroke="#2a2a2a" stroke-width="1"/><path d="M0,0L-30.24,29.72A42.4,42.4 0 0 1 30.24,-29.72Z" fill="#d3d3d3"/><path d="M24.82,-24.39L30.6,-30.07" stroke="#666" stroke-width="0.9"/><circle cx="0" cy="0" r="34.8" fill="#3333ff" stroke="#111" stroke-width="1.1"/></g><path d="M900.2,107.6L886.6,120.75M956.5,111.8L966,120.75" stroke="#111" stroke-width="1.4"/><path d="M932.8,77.3L948.9,65.3" stroke="#fff" stroke-width="2.3" stroke-linecap="round"/><g transform="translate(926.25,242.7) scale(1.016,0.986)"><path d="M-33.59,32.44A46.7,46.7 0 1 1 33.59,32.44L30.86,29.8A42.9,42.9 0 1 0 -30.86,29.8Z" fill="#fff"/><path d="M-33.59,32.44A46.7,46.7 0 1 1 33.59,32.44" fill="none" stroke="#2a2a2a" stroke-width="1"/><circle cx="0" cy="0" r="42.9" fill="#acacac" stroke="#2a2a2a" stroke-width="1"/><path d="M0,0L-30.24,29.72A42.4,42.4 0 0 1 30.24,-29.72Z" fill="#d3d3d3"/><path d="M24.82,-24.39L30.6,-30.07" stroke="#666" stroke-width="0.9"/><circle cx="0" cy="0" r="34.8" fill="#00f400" stroke="#111" stroke-width="1.1"/></g><path d="M900.2,268.2L886.6,281.35M956.5,272.4L966,281.35" stroke="#111" stroke-width="1.4"/><path d="M912.3,217.4L923.7,236.6" stroke="#fff" stroke-width="1.5" stroke-linecap="round"/><g transform="translate(926.25,376.4) scale(1.016,0.986)"><path d="M-33.59,32.44A46.7,46.7 0 1 1 33.59,32.44L30.86,29.8A42.9,42.9 0 1 0 -30.86,29.8Z" fill="#fff"/><path d="M-33.59,32.44A46.7,46.7 0 1 1 33.59,32.44" fill="none" stroke="#2a2a2a" stroke-width="1"/><circle cx="0" cy="0" r="42.9" fill="#acacac" stroke="#2a2a2a" stroke-width="1"/><path d="M0,0L-30.24,29.72A42.4,42.4 0 0 1 30.24,-29.72Z" fill="#d3d3d3"/><path d="M24.82,-24.39L30.6,-30.07" stroke="#666" stroke-width="0.9"/><circle cx="0" cy="0" r="34.8" fill="#9b9b9b" stroke="#111" stroke-width="1.1"/></g><path d="M900.2,401.9L886.6,415.05M956.5,406.1L966,415.05" stroke="#111" stroke-width="1.4"/><path d="M912.3,350.9L923.4,370.6" stroke="#fff" stroke-width="1.5" stroke-linecap="round"/></svg>
<span class="t" id="t0" style="left:92.85px;top:9.23px;color:#000;letter-spacing:0.250px">Horizontal</span>
<span class="t" id="t1" style="left:101.2px;top:151.83px;color:#000;letter-spacing:0.386px">Vertical</span>
<span class="t" id="t2" style="left:102.2px;top:449.83px;color:#000;letter-spacing:0.150px">Trigger</span>
<span class="t" id="t3" style="left:20.6px;top:27.13px;color:#000;letter-spacing:-0.200px">Time / DIV</span>
<span class="t" id="t4" style="left:21.65px;top:86.23px;color:#000;letter-spacing:-0.180px">Format</span>
<span class="t" id="t5" style="left:23.35px;top:53.43px;color:#000;letter-spacing:0.090px">40.0us</span>
<span class="t" id="t6" style="left:22.45px;top:112.43px;color:#000;letter-spacing:0.450px">Y - T</span>
<span class="t" id="t7" style="left:38.05px;top:176.03px;color:#000;letter-spacing:0.000px;transform:scaleX(0.870)">CH1</span>
<span class="t" id="t8" style="left:22.45px;top:204.13px;color:#000;letter-spacing:0.338px">500mV</span>
<span class="t" id="t9" style="left:22.45px;top:239.83px;color:#000;letter-spacing:-0.450px">DC</span>
<span class="t" id="t10" style="left:23.35px;top:275.23px;color:#000;letter-spacing:0.225px">x 1</span>
<span class="t" id="t11" style="left:37.05px;top:312.33px;color:#000;letter-spacing:0.000px;transform:scaleX(0.931)">CH2</span>
<span class="t" id="t12" style="left:20.9px;top:339.23px;color:#838383;letter-spacing:0.450px">500mV</span>
<span class="t" id="t13" style="left:20.9px;top:375.13px;color:#838383;letter-spacing:0.900px">DC</span>
<span class="t" id="t14" style="left:21.8px;top:411.03px;color:#838383;letter-spacing:0.450px">x 1</span>
<span class="t" id="t15" style="left:18.15px;top:485.73px;color:#000;letter-spacing:0.082px">Trigger Mode</span>
<span class="t" id="t16" style="left:18.15px;top:524.23px;color:#000;letter-spacing:0.412px">Trigger Sweep</span>
<span class="t" id="t17" style="left:18.15px;top:560.73px;color:#000;letter-spacing:0.242px">Trigger Source</span>
<span class="t" id="t18" style="left:18.15px;top:599.23px;color:#000;letter-spacing:0.112px">Trigger Slope</span>
<span class="t" id="t19" style="left:140.1px;top:486.83px;color:#000;letter-spacing:0.300px">Edge</span>
<span class="t" id="t20" style="left:141px;top:524.83px;color:#000;letter-spacing:0.300px">Auto</span>
<span class="t" id="t21" style="left:141px;top:562.03px;color:#000;letter-spacing:0.000px;transform:scaleX(0.947)">CH2</span>
<span class="t" id="t22" style="left:141.4px;top:600.43px;color:#000;letter-spacing:-0.450px">+</span>
<div class="rt2"></div><div class="rt"></div><div class="re1"></div><div class="re2"></div>
</div>
</body></html>
